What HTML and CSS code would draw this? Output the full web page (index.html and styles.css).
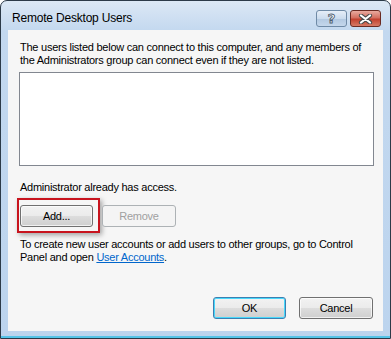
FILE: index.html
```html
<!DOCTYPE html>
<html lang="en">
<head>
<meta charset="UTF-8">
<title>Remote Desktop Users</title>
<link rel="stylesheet" href="styles.css">
</head>
<body>

<div class="window">
	<div class="titlebar">
		<span class="title">Remote Desktop Users</span>
		<div class="capbtns">
			<span class="capbtn help">?</span>
			<span class="capbtn close">
				<svg width="15" height="10" viewBox="0 0 15 10">
					<path d="M3 1.5 L12 8.5 M12 1.5 L3 8.5" stroke="#4a4a4a" stroke-width="4.2" stroke-linecap="round"/>
					<path d="M3 1.5 L12 8.5 M12 1.5 L3 8.5" stroke="#fff" stroke-width="2.2" stroke-linecap="round"/>
				</svg>
			</span>
		</div>
	</div>
	<div class="client">
		<p class="intro">The users listed below can connect to this computer, and any members of<br>the Administrators group can connect even if they are not listed.</p>
		<div class="userlist"></div>
		<p class="access">Administrator already has access.</p>
		<div class="row_btns">
			<span class="btn btn_add">Add...<span class="mark"></span></span>
			<span class="btn disabled">Remove</span>
		</div>
		<p class="hint">To create new user accounts or add users to other groups, go to Control<br>Panel and open <a href="#">User Accounts</a>.</p>
		<div class="row_foot">
			<span class="btn default btn_ok">OK</span>
			<span class="btn btn_cancel">Cancel</span>
		</div>
	</div>
</div>

</body>
</html>
```

FILE: styles.css
```css
*,
*::before,
*::after {
	margin: 0;
	padding: 0;
	box-sizing: border-box;
}
HTML, BODY {
	width: 100%;
	height: 100%;
	background: #ffffff;
}
BODY {
	font-family: "Liberation Sans", Arial, sans-serif;
	font-size: 11px;
	letter-spacing: -0.25px;
	color: #000;
}

.window {
	display: flex;
	flex-direction: column;
	width: 391px;
	height: 339px;
	border: 1px solid #2c3a48;
	border-radius: 7px 7px 0 0;
	background: linear-gradient(#dce8f5, #c3d8ef 30px, #bcd4ee);
	box-shadow: inset 0 -2px 0 #55c4e8;
	padding: 0 7px 7px 7px;
}

/* title bar */
.titlebar {
	display: flex;
	align-items: flex-start;
	justify-content: space-between;
	height: 29px;
}
.title {
	font-family: "Liberation Sans", Arial, sans-serif;
	font-size: 12px;
	letter-spacing: -0.2px;
	padding: 10px 0 0 4px;
	color: #000;
}
.capbtns {
	display: flex;
	gap: 3px;
	padding: 9px 2px 0 0;
}
.capbtn {
	display: flex;
	align-items: center;
	justify-content: center;
	width: 31px;
	height: 17px;
	border-radius: 3px;
}
.help {
	border: 1px solid #6f8aa6;
	background: linear-gradient(#e6eef8, #cbdcee 50%, #b2c8e1 51%, #c4d7ec);
	font-family: "DejaVu Sans", sans-serif;
	font-weight: bold;
	font-size: 13px;
	letter-spacing: 0;
	color: #fff;
	-webkit-text-stroke: 0.9px #4f5f70;
	line-height: 1;
}
.close {
	border: 1px solid #6a2a22;
	background: linear-gradient(#e9aa9f, #d46f60 45%, #c2412f 55%, #d57a66);
}

/* client area */
.client {
	flex: 1;
	display: flex;
	flex-direction: column;
	background: #f6f6f6;
	padding: 11px 9px 12px 11px;
	line-height: 13px;
}
.intro {
	padding-left: 1px;
	white-space: nowrap;
}
.userlist {
	height: 94px;
	margin-top: 5px;
	border: 1px solid #828790;
	background: #fff;
}
.access {
	margin-top: 15px;
	padding-left: 1px;
}
.row_btns {
	display: flex;
	gap: 9px;
	margin-top: 11px;
	padding-left: 1px;
}
.hint {
	margin-top: 11px;
	padding-left: 1px;
	white-space: nowrap;
}
.hint A {
	color: #0066cc;
}
.row_foot {
	display: flex;
	justify-content: flex-end;
	gap: 13px;
	margin-top: auto;
	padding-right: 1px;
}

/* buttons */
.btn {
	position: relative;
	display: flex;
	align-items: center;
	justify-content: center;
	width: 74px;
	height: 22px;
	border: 1px solid #707070;
	border-radius: 3px;
	background: linear-gradient(#f2f2f2, #ebebeb 50%, #dddddd 51%, #cfcfcf);
	box-shadow: inset 0 0 0 1px rgba(255,255,255,0.7);
	color: #000;
}
.btn.disabled {
	border-color: #adb2b5;
	background: #f4f4f4;
	box-shadow: none;
	color: #a0a0a0;
}
.btn.default {
	border-color: #3c7fb1;
	box-shadow: inset 0 0 0 1px #48d8fb;
}
.btn_ok {
	width: 73px;
}
.btn_add {
	width: 73px;
}

/* red annotation frame over the Add button */
.mark {
	position: absolute;
	left: -4px;
	top: -8px;
	width: 83px;
	height: 35px;
	border: 2px solid #c8141e;
	box-shadow: 2px 2px 5px rgba(0,0,0,0.35);
}
```
